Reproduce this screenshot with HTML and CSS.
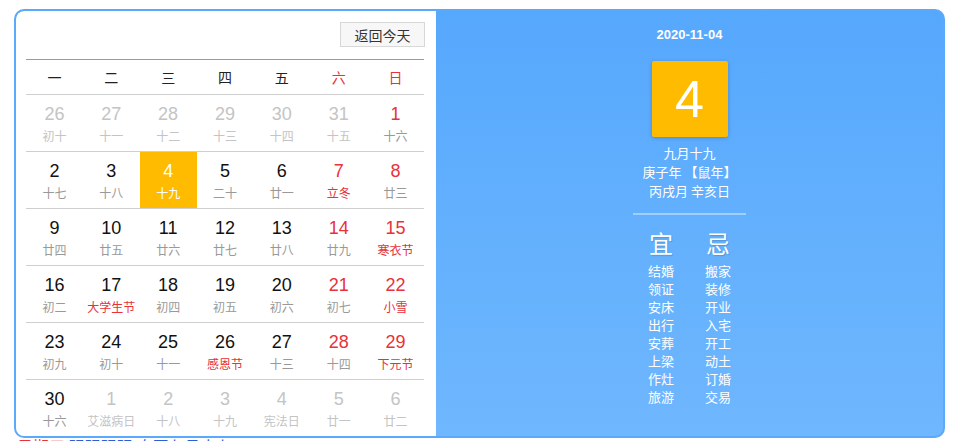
FILE: index.html
```html
<!DOCTYPE html>
<html lang="zh-CN">

<head>
    <meta charset="UTF-8">
    <meta name="viewport" content="width=device-width, initial-scale=1.0">
    <title>万年历</title>
    <link rel="stylesheet" href="styles.css">
</head>

<body>
    <div class="calendar">
        <div class="month-panel">
            <div class="toolbar">
                <button class="today-btn">返回今天</button>
            </div>
            <div class="week-head">
                <div>一</div>
                <div>二</div>
                <div>三</div>
                <div>四</div>
                <div>五</div>
                <div class="weekend">六</div>
                <div class="weekend">日</div>
            </div>
            <div class="days">
                <div class="day other"><span class="num">26</span><span class="lunar">初十</span></div>
                <div class="day other"><span class="num">27</span><span class="lunar">十一</span></div>
                <div class="day other"><span class="num">28</span><span class="lunar">十二</span></div>
                <div class="day other"><span class="num">29</span><span class="lunar">十三</span></div>
                <div class="day other"><span class="num">30</span><span class="lunar">十四</span></div>
                <div class="day other"><span class="num">31</span><span class="lunar">十五</span></div>
                <div class="day weekend"><span class="num">1</span><span class="lunar">十六</span></div>

                <div class="day"><span class="num">2</span><span class="lunar">十七</span></div>
                <div class="day"><span class="num">3</span><span class="lunar">十八</span></div>
                <div class="day today"><span class="num">4</span><span class="lunar">十九</span></div>
                <div class="day"><span class="num">5</span><span class="lunar">二十</span></div>
                <div class="day"><span class="num">6</span><span class="lunar">廿一</span></div>
                <div class="day weekend"><span class="num">7</span><span class="lunar fest">立冬</span></div>
                <div class="day weekend"><span class="num">8</span><span class="lunar">廿三</span></div>

                <div class="day"><span class="num">9</span><span class="lunar">廿四</span></div>
                <div class="day"><span class="num">10</span><span class="lunar">廿五</span></div>
                <div class="day"><span class="num">11</span><span class="lunar">廿六</span></div>
                <div class="day"><span class="num">12</span><span class="lunar">廿七</span></div>
                <div class="day"><span class="num">13</span><span class="lunar">廿八</span></div>
                <div class="day weekend"><span class="num">14</span><span class="lunar">廿九</span></div>
                <div class="day weekend"><span class="num">15</span><span class="lunar fest">寒衣节</span></div>

                <div class="day"><span class="num">16</span><span class="lunar">初二</span></div>
                <div class="day"><span class="num">17</span><span class="lunar fest">大学生节</span></div>
                <div class="day"><span class="num">18</span><span class="lunar">初四</span></div>
                <div class="day"><span class="num">19</span><span class="lunar">初五</span></div>
                <div class="day"><span class="num">20</span><span class="lunar">初六</span></div>
                <div class="day weekend"><span class="num">21</span><span class="lunar">初七</span></div>
                <div class="day weekend"><span class="num">22</span><span class="lunar fest">小雪</span></div>

                <div class="day"><span class="num">23</span><span class="lunar">初九</span></div>
                <div class="day"><span class="num">24</span><span class="lunar">初十</span></div>
                <div class="day"><span class="num">25</span><span class="lunar">十一</span></div>
                <div class="day"><span class="num">26</span><span class="lunar fest">感恩节</span></div>
                <div class="day"><span class="num">27</span><span class="lunar">十三</span></div>
                <div class="day weekend"><span class="num">28</span><span class="lunar">十四</span></div>
                <div class="day weekend"><span class="num">29</span><span class="lunar fest">下元节</span></div>

                <div class="day last"><span class="num">30</span><span class="lunar">十六</span></div>
                <div class="day last other"><span class="num">1</span><span class="lunar">艾滋病日</span></div>
                <div class="day last other"><span class="num">2</span><span class="lunar">十八</span></div>
                <div class="day last other"><span class="num">3</span><span class="lunar">十九</span></div>
                <div class="day last other"><span class="num">4</span><span class="lunar">宪法日</span></div>
                <div class="day last other"><span class="num">5</span><span class="lunar">廿一</span></div>
                <div class="day last other"><span class="num">6</span><span class="lunar">廿二</span></div>
            </div>
        </div>
        <div class="detail-panel">
            <div class="detail-date">2020-11-04</div>
            <div class="big-day">4</div>
            <div class="detail-lunar">
                <div>九月十九</div>
                <div>庚子年 【鼠年】</div>
                <div>丙戌月 辛亥日</div>
            </div>
            <div class="divider"></div>
            <div class="almanac">
                <div class="almanac-col">
                    <div class="almanac-title">宜</div>
                    <div>结婚</div>
                    <div>领证</div>
                    <div>安床</div>
                    <div>出行</div>
                    <div>安葬</div>
                    <div>上梁</div>
                    <div>作灶</div>
                    <div>旅游</div>
                </div>
                <div class="almanac-col">
                    <div class="almanac-title">忌</div>
                    <div>搬家</div>
                    <div>装修</div>
                    <div>开业</div>
                    <div>入宅</div>
                    <div>开工</div>
                    <div>动土</div>
                    <div>订婚</div>
                    <div>交易</div>
                </div>
            </div>
        </div>
    </div>
    <div class="footnote"><span class="red">星期三</span> <span class="blue">阴阴阴阴 农历九月十九</span></div>
</body>

</html>
```

FILE: styles.css
```css
html,
body {
    margin: 0;
    font-family: "Liberation Sans", "Noto Sans CJK SC", sans-serif;
    background: #fff;
    overflow: hidden;
}

.calendar {
    display: flex;
    width: 927px;
    height: 425px;
    margin: 9px 0 0 14px;
    border: 2px solid #5ba9fb;
    border-radius: 10px;
    background: linear-gradient(#56a8fd, #6fb7fe);
    overflow: hidden;
}

.month-panel {
    width: 398px;
    padding: 11px 12px 0 10px;
    background: #fff;
    border-radius: 8px 0 0 0;
}

.toolbar {
    display: flex;
    justify-content: flex-end;
    margin-bottom: 12px;
}

.today-btn {
    width: 85px;
    height: 25px;
    padding: 0;
    margin-right: -1px;
    font-family: "Noto Sans CJK SC", sans-serif;
    font-size: 14px;
    color: #333;
    background: #f7f7f7;
    border: 1px solid #d8d8d8;
    border-radius: 0;
}

.week-head {
    display: grid;
    grid-template-columns: repeat(7, 1fr);
    height: 34px;
    align-items: center;
    border-top: 1px solid #5ba9fb;
    border-bottom: 1px solid #cfcfcf;
    font-family: "Noto Sans CJK SC", sans-serif;
    font-size: 14px;
    color: #222;
    text-align: center;
}

.week-head .weekend {
    color: #e8313a;
}

.days {
    display: grid;
    grid-template-columns: repeat(7, 1fr);
}

.day {
    display: flex;
    flex-direction: column;
    align-items: center;
    height: 56px;
    border-bottom: 1px solid #cfcfcf;
    box-sizing: content-box;
}

.day.last {
    border-bottom: none;
}

.num {
    margin-top: 8px;
    font-size: 18px;
    line-height: 22px;
    color: #111;
}

.lunar {
    margin-top: 3px;
    font-family: "Noto Sans CJK SC", sans-serif;
    font-size: 12px;
    line-height: 16px;
    color: #999;
}

.day.weekend .num {
    color: #e8313a;
}

.lunar.fest {
    color: #e8313a;
}

.day.other .num {
    color: #c4c4c4;
}

.day.other .lunar {
    color: #c4c4c4;
}

.day.today {
    background: #ffbb00;
}

.day.today .num,
.day.today .lunar {
    color: #fff;
}

.detail-panel {
    flex: 1;
    display: flex;
    flex-direction: column;
    align-items: center;
    padding-top: 16px;
    color: #fff;
    font-family: "Noto Sans CJK SC", sans-serif;
}

.detail-date {
    font-family: "Liberation Sans", sans-serif;
    font-size: 13px;
    font-weight: bold;
    line-height: 16px;
}

.big-day {
    width: 76px;
    height: 76px;
    margin-top: 18px;
    background: #ffbb00;
    border-radius: 2px;
    box-shadow: 0 1px 4px rgba(0, 0, 0, 0.2);
    font-family: "Liberation Sans", sans-serif;
    font-size: 52px;
    line-height: 76px;
    text-align: center;
}

.detail-lunar {
    margin-top: 6px;
    font-size: 13px;
    line-height: 19px;
    text-align: center;
}

.divider {
    width: 113px;
    height: 2px;
    margin-top: 13px;
    background: rgba(255, 255, 255, 0.4);
}

.almanac {
    display: flex;
    gap: 17px;
    margin-top: 13px;
}

.almanac-col {
    width: 40px;
    font-size: 13px;
    line-height: 18px;
    text-align: center;
}

.almanac-title {
    font-size: 24px;
    line-height: 30px;
    margin-bottom: 4px;
    text-shadow: 1px 1px 1px rgba(0, 0, 0, 0.15);
}

.footnote {
    margin: -2px 0 0 17px;
    font-family: "Noto Sans CJK SC", sans-serif;
    font-size: 16px;
    line-height: 20px;
}

.red {
    color: #e8313a;
}

.blue {
    color: #2b5fd9;
}
```
